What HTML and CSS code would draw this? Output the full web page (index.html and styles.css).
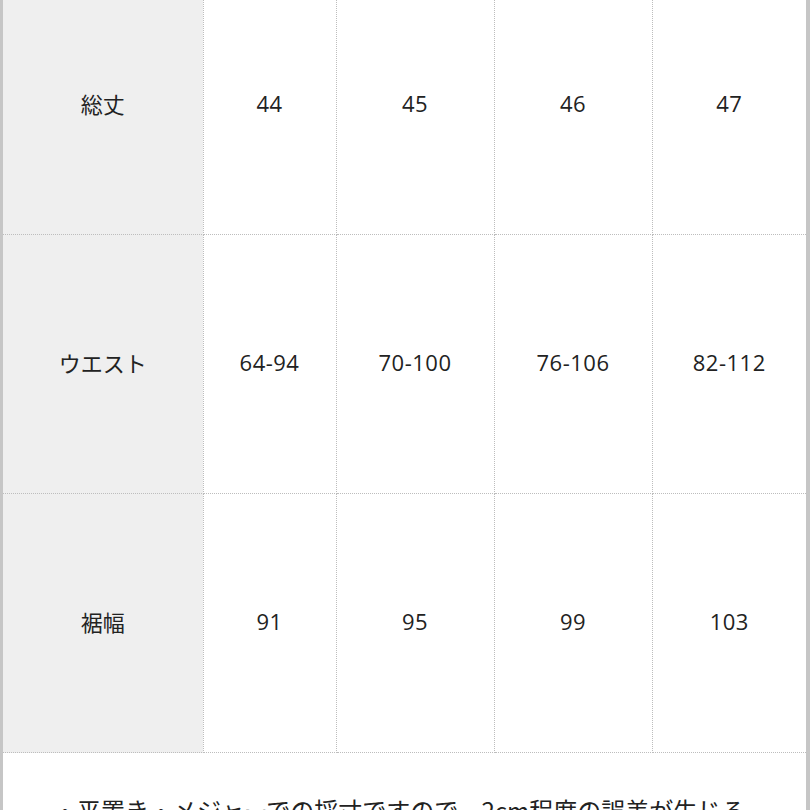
FILE: index.html
```html
<!DOCTYPE html>
<html lang="ja">
<head>
<meta charset="utf-8">
<link rel="stylesheet" href="styles.css">
</head>
<body>
<div class="frame">
  <table class="size-table">
    <colgroup>
      <col class="c-head">
      <col class="c-1">
      <col class="c-2">
      <col class="c-3">
      <col class="c-4">
    </colgroup>
    <tbody>
      <tr>
        <th>総丈</th><td>44</td><td>45</td><td>46</td><td>47</td>
      </tr>
      <tr>
        <th>ウエスト</th><td>64-94</td><td>70-100</td><td>76-106</td><td>82-112</td>
      </tr>
      <tr>
        <th>裾幅</th><td>91</td><td>95</td><td>99</td><td>103</td>
      </tr>
    </tbody>
  </table>
  <p class="note">・平置き・メジャーでの採寸ですので、2cm程度の誤差が生じる</p>
</div>
</body>
</html>
```
FILE: styles.css
```css
html, body {
  margin: 0;
  padding: 0;
  background: #ffffff;
  overflow: hidden;
}
body {
  font-family: "Noto Sans CJK JP", "Noto Sans", sans-serif;
  color: #222222;
}
.frame {
  margin-top: -24px;
  width: 810px;
  box-sizing: border-box;
  border-left: 3px solid #c6c6c6;
  border-right: 4px solid #c6c6c6;
  height: 900px;
}
.size-table {
  border-collapse: collapse;
  table-layout: fixed;
  width: 803px;
}
.c-head { width: 200px; }
.c-1 { width: 133px; }
.c-2 { width: 158px; }
.c-3 { width: 158px; }
.c-4 { width: 154px; }
.size-table th,
.size-table td {
  height: 254px;
  padding: 0 0 4px 0;
  text-align: center;
  vertical-align: middle;
  font-size: 22px;
  font-weight: 400;
  border-bottom: 1px dotted #bdbdbd;
  border-right: 1px dotted #bdbdbd;
}
.size-table td {
  font-family: "Open Sans", "Noto Sans CJK JP", sans-serif;
  letter-spacing: 0.5px;
}
.size-table td:last-child {
  border-right: none;
}
.size-table th {
  background: #efefef;
}
.note {
  margin: 39px 0 0 50px;
  font-size: 24px;
  line-height: 36px;
  white-space: nowrap;
}
```
